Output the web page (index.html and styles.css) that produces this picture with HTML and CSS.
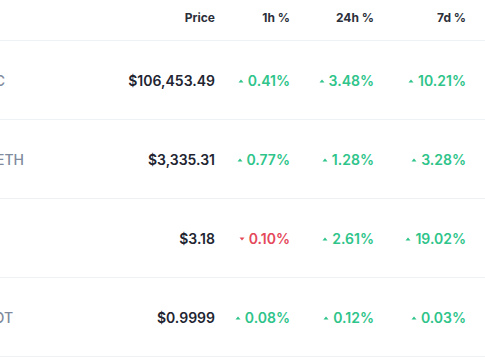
FILE: index.html
```html
<!DOCTYPE html>
<html lang="en">
<head>
<meta charset="utf-8">
<title>Prices</title>
<link rel="stylesheet" href="styles.css">
</head>
<body>
<div class="viewport">
  <div class="table">
    <div class="row head">
      <div class="cell name"></div>
      <div class="cell num">Price</div>
      <div class="cell num">1h %</div>
      <div class="cell num">24h %</div>
      <div class="cell num">7d %</div>
      <div class="cell"></div>
    </div>
    <div class="row">
      <div class="cell name"><span class="coin">Bitcoin</span><span class="sym">BTC</span></div>
      <div class="cell num price">$106,453.49</div>
      <div class="cell num"><span class="chg up"><svg viewBox="0 0 8 8"><path d="M1.5 5.5 L4 2.5 L6.5 5.5 Z"/></svg>0.41%</span></div>
      <div class="cell num"><span class="chg up"><svg viewBox="0 0 8 8"><path d="M1.5 5.5 L4 2.5 L6.5 5.5 Z"/></svg>3.48%</span></div>
      <div class="cell num"><span class="chg up"><svg viewBox="0 0 8 8"><path d="M1.5 5.5 L4 2.5 L6.5 5.5 Z"/></svg>10.21%</span></div>
      <div class="cell"></div>
    </div>
    <div class="row">
      <div class="cell name"><span class="coin">Ethereum</span><span class="sym">ETH</span></div>
      <div class="cell num price">$3,335.31</div>
      <div class="cell num"><span class="chg up"><svg viewBox="0 0 8 8"><path d="M1.5 5.5 L4 2.5 L6.5 5.5 Z"/></svg>0.77%</span></div>
      <div class="cell num"><span class="chg up"><svg viewBox="0 0 8 8"><path d="M1.5 5.5 L4 2.5 L6.5 5.5 Z"/></svg>1.28%</span></div>
      <div class="cell num"><span class="chg up"><svg viewBox="0 0 8 8"><path d="M1.5 5.5 L4 2.5 L6.5 5.5 Z"/></svg>3.28%</span></div>
      <div class="cell"></div>
    </div>
    <div class="row">
      <div class="cell name"><span class="coin">XRP</span><span class="sym">XRP</span></div>
      <div class="cell num price">$3.18</div>
      <div class="cell num"><span class="chg down"><svg viewBox="0 0 8 8"><path d="M1.5 2.5 L4 5.5 L6.5 2.5 Z"/></svg>0.10%</span></div>
      <div class="cell num"><span class="chg up"><svg viewBox="0 0 8 8"><path d="M1.5 5.5 L4 2.5 L6.5 5.5 Z"/></svg>2.61%</span></div>
      <div class="cell num"><span class="chg up"><svg viewBox="0 0 8 8"><path d="M1.5 5.5 L4 2.5 L6.5 5.5 Z"/></svg>19.02%</span></div>
      <div class="cell"></div>
    </div>
    <div class="row">
      <div class="cell name"><span class="coin">Tether</span><span class="sym">USDT</span></div>
      <div class="cell num price">$0.9999</div>
      <div class="cell num"><span class="chg up"><svg viewBox="0 0 8 8"><path d="M1.5 5.5 L4 2.5 L6.5 5.5 Z"/></svg>0.08%</span></div>
      <div class="cell num"><span class="chg up"><svg viewBox="0 0 8 8"><path d="M1.5 5.5 L4 2.5 L6.5 5.5 Z"/></svg>0.12%</span></div>
      <div class="cell num"><span class="chg up"><svg viewBox="0 0 8 8"><path d="M1.5 5.5 L4 2.5 L6.5 5.5 Z"/></svg>0.03%</span></div>
      <div class="cell"></div>
    </div>
  </div>
</div>
</body>
</html>
```
FILE: styles.css
```css
html, body {
  margin: 0;
  padding: 0;
  background: #ffffff;
  overflow: hidden;
}
body {
  font-family: Inter, "Noto Sans", sans-serif;
  color: #222531;
  width: 485px;
  height: 360px;
}
.viewport {
  width: 485px;
  overflow: hidden;
}
.table {
  margin-left: -75px;
  width: 560px;
}
.row {
  display: grid;
  grid-template-columns: 185px 105px 75px 84px 92px 1fr;
  height: 78px;
  align-items: center;
  border-bottom: 1px solid #eff2f5;
}
.row.head {
  height: 40px;
  align-items: start;
}
.head .cell {
  font-size: 12px;
  font-weight: 700;
  color: #2b2f3a;
  padding-top: 10px;
}
.cell {
  font-size: 14px;
  white-space: nowrap;
}
.num {
  text-align: right;
}
.name {
  display: flex;
  align-items: center;
  gap: 6px;
}
.coin {
  font-weight: 600;
  color: #222531;
}
.sym {
  color: #808a9d;
  font-weight: 500;
}
.price {
  font-weight: 600;
}
.chg {
  display: inline-flex;
  align-items: center;
  gap: 3px;
  font-weight: 600;
}
.chg svg {
  width: 8px;
  height: 8px;
  fill: currentColor;
}
.up {
  color: #2ec48a;
}
.down {
  color: #e4485a;
}
```
